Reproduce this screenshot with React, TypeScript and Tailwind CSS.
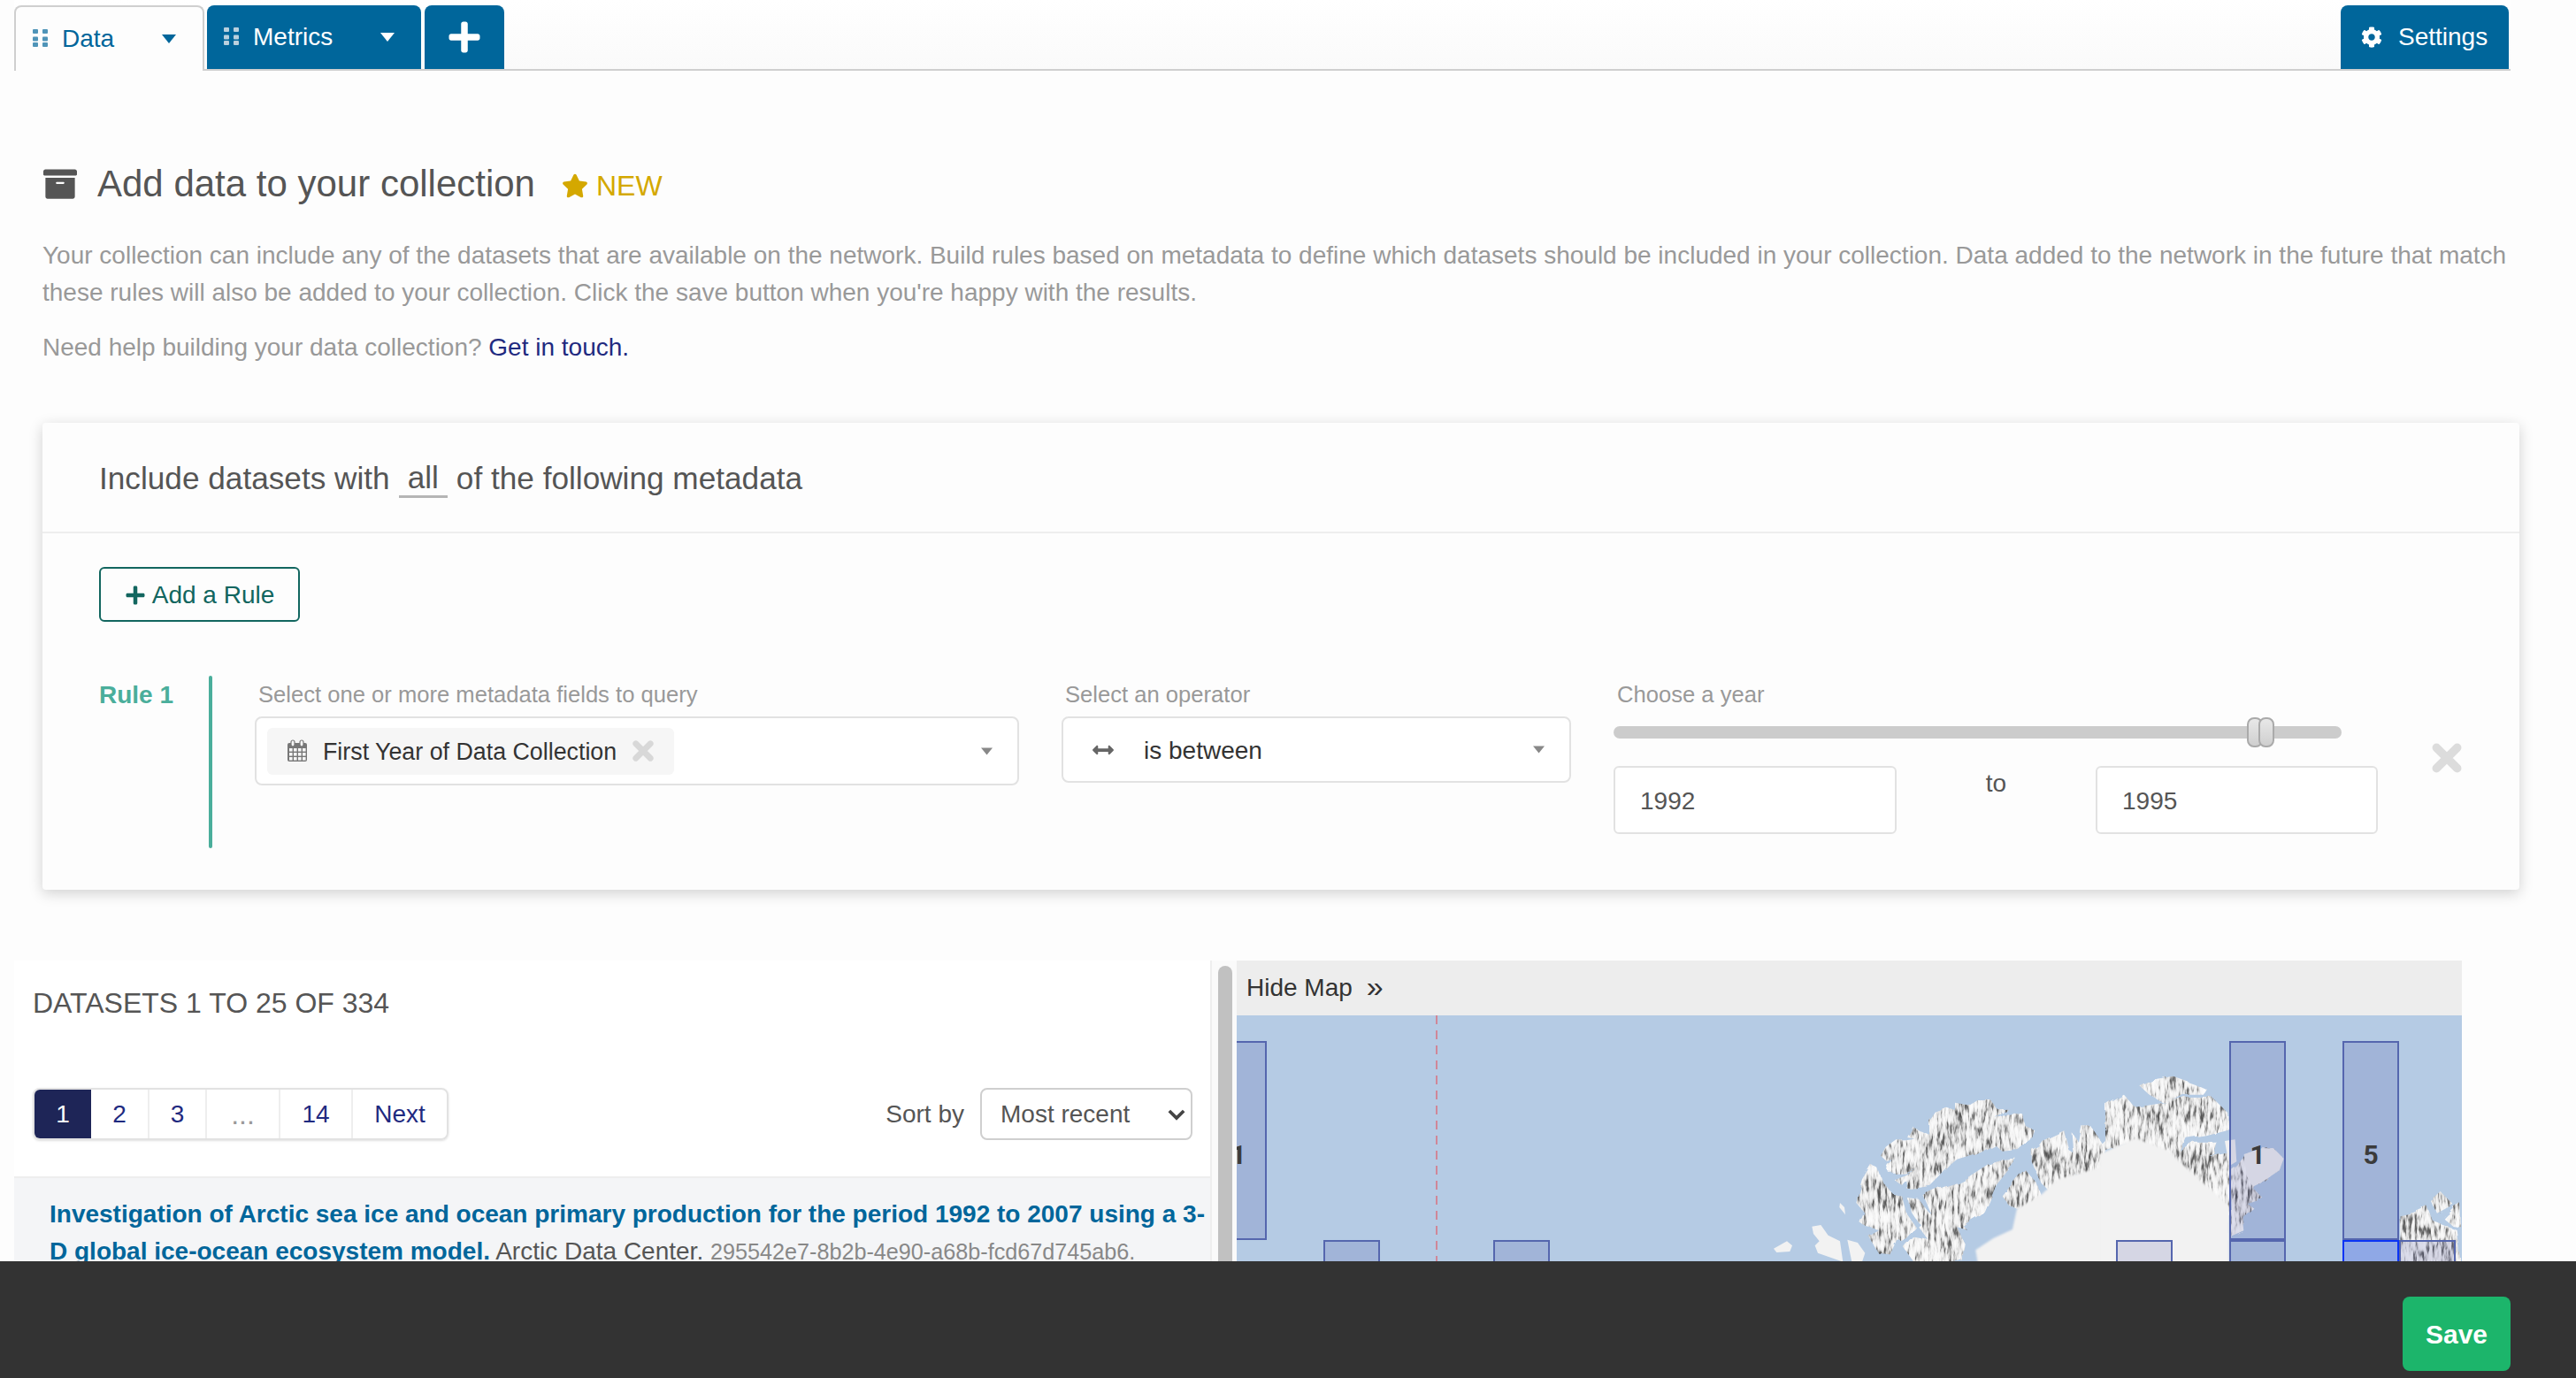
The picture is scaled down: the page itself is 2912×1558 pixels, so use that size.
import React from 'react';
import { FaArchive, FaArrowsAltH, FaCog, FaPlus, FaStar } from 'react-icons/fa';

// Small 2x3 drag handle shown in the tabs
function DragDots({ className }: { className: string }) {
    return (
        <svg viewBox="0 0 17 22" className={className} fill="currentColor">
            {[0, 8.5, 17].map((y) => (
                <g key={y}>
                    <rect x="0" y={y - (y === 17 ? 2 : 0)} width="6" height="5" rx="1" />
                    <rect x="11" y={y - (y === 17 ? 2 : 0)} width="6" height="5" rx="1" />
                </g>
            ))}
        </svg>
    );
}

function Caret({ className }: { className: string }) {
    return (
        <svg viewBox="0 0 16 10" className={className} fill="currentColor">
            <path d="M0 0h16L8 10z" />
        </svg>
    );
}

// Chunky remove cross, the icon set's own is too thin
function RemoveMark({ className }: { className: string }) {
    return (
        <svg viewBox="0 0 32 32" className={className} stroke="currentColor" strokeWidth="9" strokeLinecap="round">
            <path d="M5 5l22 22M27 5L5 27" />
        </svg>
    );
}

function CalendarIcon() {
    return (
        <svg viewBox="0 0 24 26" className="w-[24px] h-[26px] text-[#777]">
            <rect x="1" y="4" width="22" height="21" rx="2" fill="currentColor" />
            <g fill="#f6f6f6">
                {[10, 15, 20].map((y) =>
                    [3, 8, 13, 18].map((x) => <rect key={`${x}-${y}`} x={x} y={y} width="3.6" height="3.6" />)
                )}
            </g>
            <rect x="5" y="1" width="4" height="7" rx="2" fill="#f6f6f6" stroke="currentColor" strokeWidth="1.2" />
            <rect x="15" y="1" width="4" height="7" rx="2" fill="#f6f6f6" stroke="currentColor" strokeWidth="1.2" />
        </svg>
    );
}

const sheetA = [
    '690,170 745,180 770,165 815,165 830,190 868,188 830,225 885,200 915,205 930,250 958,262 945,295 905,330 850,335 825,312 765,345 700,365 680,382 640,425 610,455 570,462 530,465 525,430 540,415 510,450 482,430 520,415 560,395 520,410 468,410 462,388 480,365 462,372 438,350 455,320 490,295 520,295 550,290 525,285 545,248 575,265 600,275 600,230 620,200 660,185 690,195',
    '585,485 640,460 700,440 730,425 800,380 850,365 900,362 870,400 830,450 790,545 750,570 720,590 735,605 700,595 725,650 720,690 720,710 550,710 515,660 545,625 600,635 565,590 610,545',
    '375,430 405,380 430,395 445,440 480,480 510,485 525,545 555,590 510,640 495,630 470,685 430,680 395,620 430,600 385,590 370,580 385,545 355,510 365,465',
    '530,495 570,500 600,540 615,555 590,600 560,570 540,540',
    '950,330 975,315 985,300 1060,265 1075,330 1090,340 1085,270 1110,305 1120,250 1150,250 1190,310 1200,300 1200,400 1100,420 1010,470 980,440 950,370',
    '855,490 900,430 930,400 965,440 980,490 960,520 900,530 870,515',
];

const sheetAPlain = [
    '300,510 315,525 318,550 298,525',
    '205,590 235,585 260,620 300,640 310,710 225,680 215,655 230,640 210,615',
    '75,665 120,640 138,655 130,675 85,678',
    '325,635 360,645 385,680 375,710 340,710',
];

const sheetB = [
    '118,115 170,90 230,80 300,105 345,125 335,140 270,140 225,165 195,170 150,145',
    '0,175 60,140 100,185 140,180 200,170 270,150 360,150 415,205 415,260 340,280 275,290 255,335 300,305 380,305 370,345 340,355 420,340 420,640 340,640 300,500 100,300 0,330',
    '470,345 530,325 570,325 605,360 590,400 530,440 500,460 530,490 510,500 480,510 505,530 470,560 475,610 430,630 420,400 445,380',
    '995,550 1040,540 1090,520 1110,570 1190,600 1205,710 1000,710',
    '1110,510 1145,480 1180,515 1125,545',
    '1145,560 1185,520 1205,510 1205,590 1175,585',
];

const cells = [
    { x: 1368, y: 1177, w: 64, h: 225 },
    { x: 2520, y: 1177, w: 64, h: 225 },
    { x: 2648, y: 1177, w: 64, h: 225 },
    { x: 1496, y: 1402, w: 64, h: 60 },
    { x: 1688, y: 1402, w: 64, h: 60 },
    { x: 2392, y: 1402, w: 64, h: 60 },
    { x: 2520, y: 1402, w: 64, h: 60 },
    { x: 2712, y: 1402, w: 64, h: 60 },
];

function ArcticMap() {
    return (
        <svg viewBox="1398 1148 1385 278" className="block w-[1385px] h-[278px] bg-[#b5cbe4]">
            <defs>
                <filter id="relief" x="0" y="0" width="100%" height="100%" colorInterpolationFilters="sRGB">
                    <feTurbulence type="fractalNoise" baseFrequency="0.03" numOctaves="3" seed="7" result="edge" />
                    <feDisplacementMap in="SourceGraphic" in2="edge" scale="9" result="shape" />
                    <feTurbulence type="fractalNoise" baseFrequency="0.3 0.07" numOctaves="3" seed="4" result="fine" />
                    <feTurbulence type="fractalNoise" baseFrequency="0.04 0.03" numOctaves="2" seed="11" result="broad" />
                    <feColorMatrix in="fine" type="matrix" values="1 0 0 0 0  1 0 0 0 0  1 0 0 0 0  0 0 0 0 1" result="fineGray" />
                    <feColorMatrix in="broad" type="matrix" values="1 0 0 0 0  1 0 0 0 0  1 0 0 0 0  0 0 0 0 1" result="broadGray" />
                    <feComposite in="fineGray" in2="broadGray" operator="arithmetic" k1="0" k2="1.1" k3="0.55" k4="-0.33" result="mixed" />
                    <feComponentTransfer in="mixed" result="streaks">
                        <feFuncR type="table" tableValues="0.3 0.34 0.45 0.68 0.86 0.94 0.97 0.98 0.99 1" />
                        <feFuncG type="table" tableValues="0.3 0.34 0.45 0.68 0.86 0.94 0.97 0.98 0.99 1" />
                        <feFuncB type="table" tableValues="0.3 0.34 0.45 0.68 0.86 0.94 0.97 0.98 0.99 1" />
                    </feComponentTransfer>
                    <feGaussianBlur in="streaks" stdDeviation="0.45" result="soft" />
                    <feComposite in="soft" in2="shape" operator="in" />
                </filter>
                <filter id="soft" x="-5%" y="-5%" width="110%" height="110%">
                    <feGaussianBlur stdDeviation="3" />
                </filter>
            </defs>
            <g filter="url(#relief)">
                <g transform="translate(1980 1190) scale(0.3333)">
                    {sheetA.map((p) => <polygon key={p} points={p} fill="#fff" />)}
                </g>
                <g transform="translate(2380 1190) scale(0.3333)">
                    {sheetB.map((p) => <polygon key={p} points={p} fill="#fff" />)}
                </g>
            </g>
            <g transform="translate(1980 1190) scale(0.3333)" fill="#f2f2f2">
                {sheetAPlain.map((p) => <polygon key={p} points={p} />)}
                <polygon filter="url(#soft)" points="760,670 820,630 885,600 900,530 985,480 1040,430 1200,385 1200,730 770,730" />
            </g>
            <g transform="translate(2380 1190) scale(0.3333)" fill="#f2f2f2">
                <polygon filter="url(#soft)" points="-20,345 100,290 210,330 330,440 420,520 420,730 -20,730" />
                <polygon points="405,300 440,295 445,370 420,385" />
                <polygon points="470,345 530,325 570,325 605,360 590,400 530,440 500,455 480,420" />
            </g>
            <line x1="1624" y1="1148" x2="1624" y2="1426" stroke="#d9717f" strokeWidth="1.5" strokeDasharray="10 7" />
            {cells.map((c) => (
                <rect
                    key={`${c.x}-${c.y}`}
                    x={c.x + 1}
                    y={c.y + 1}
                    width={c.w - 2}
                    height={c.h - 2}
                    fill="rgb(47,57,147)"
                    fillOpacity="0.15"
                    stroke="#5566ae"
                    strokeWidth="2"
                />
            ))}
            <rect x="2649" y="1403" width="62" height="60" fill="#8fa8e6" stroke="#0a33f5" strokeWidth="2" />
            <g fontFamily="Roboto, sans-serif" fontWeight="700" fontSize="30" fill="#3b3b3b" textAnchor="middle">
                <text x="1400" y="1316">1</text>
                <text x="2552" y="1316">1</text>
                <text x="2680" y="1316">5</text>
            </g>
        </svg>
    );
}

export default function App() {
    return (
        <div className="relative h-screen overflow-hidden bg-[#fdfdfd] font-['Liberation_Sans',Arial,sans-serif] text-[28px] text-[#555]">
            {/* Tabs */}
            <div className="ml-[16px] w-[2822px] h-[80px] flex items-end border-b-2 border-[#cfcfcf] bg-gradient-to-b from-white to-[#fafafa]">
                <div className="-mb-[2px] w-[215px] h-[74px] flex items-center pl-[19px] pr-[30px] bg-[#fdfdfd] border-2 border-b-0 border-[#cfcfcf] rounded-t-[8px] text-[#00669b]">
                    <DragDots className="w-[17px] h-[22px] text-[#4f94b8]" />
                    <span className="ml-[16px] flex-1">Data</span>
                    <Caret className="w-[16px] h-[10px]" />
                </div>
                <div className="ml-[3px] w-[242px] h-[72px] flex items-center pl-[19px] pr-[30px] bg-[#00669b] rounded-t-[8px] text-white">
                    <DragDots className="w-[17px] h-[22px] text-[#b9d0de]" />
                    <span className="ml-[16px] flex-1">Metrics</span>
                    <Caret className="w-[16px] h-[10px]" />
                </div>
                <div className="ml-[4px] w-[90px] h-[72px] flex items-center justify-center bg-[#00669b] rounded-t-[8px] text-white">
                    <FaPlus className="w-[40px] h-[40px]" />
                </div>
                <div className="ml-auto mr-[2px] w-[190px] h-[72px] flex items-center pl-[23px] bg-[#00669b] rounded-t-[8px] text-white">
                    <FaCog className="w-[24px] h-[24px]" />
                    <span className="ml-[18px]">Settings</span>
                </div>
            </div>

            {/* Intro */}
            <div className="pl-[48px] pr-[64px] pt-[106px]">
                <div className="flex items-center h-[44px]">
                    <FaArchive className="w-[40px] h-[38px] text-[#555]" />
                    <h1 className="ml-[22px] text-[42px] leading-none text-[#555]">Add data to your collection</h1>
                    <FaStar className="ml-[30px] mt-[4px] w-[30px] h-[28px] text-[#d4a800]" />
                    <span className="ml-[9px] mt-[4px] text-[32px] leading-none text-[#d4a800]">NEW</span>
                </div>
                <p className="mt-[38px] leading-[42px] text-[#999]">
                    Your collection can include any of the datasets that are available on the network. Build rules based on metadata to define which datasets should be included in your collection. Data added to the network in the future that match these rules will also be added to your collection. Click the save button when you're happy with the results.
                </p>
                <p className="mt-[20px] leading-[42px] text-[#999]">
                    Need help building your data collection? <a className="text-[#1f2a80]">Get in touch.</a>
                </p>
            </div>

            {/* Rule card */}
            <div className="mt-[64px] ml-[48px] w-[2800px] h-[528px] bg-[#fdfdfd] rounded-[4px] shadow-[0_4px_16px_rgba(0,0,0,0.18)]">
                <div className="h-[125px] pl-[64px] pt-[4px] flex items-center border-b-2 border-[#eeeeee] text-[35.2px]">
                    <span>Include datasets with</span>
                    <span className="ml-[10px] mr-[10px] px-[10px] border-b-[3px] border-[#b5b5b5] leading-[40px]">all</span>
                    <span>of the following metadata</span>
                </div>
                <div className="pl-[64px] pt-[38px]">
                    <button className="w-[227px] h-[62px] pt-[2px] flex items-center justify-center border-2 border-[#12665f] rounded-[6px] text-[#12665f]">
                        <FaPlus className="w-[24px] h-[24px] mr-[7px]" />
                        Add a Rule
                    </button>
                    <div className="mt-[61px] flex items-start">
                        <div className="w-[124px] pt-[6px] font-bold text-[#4aae9b] leading-[32px]">Rule 1</div>
                        <div className="w-[4px] h-[195px] rounded bg-[#4aae9b]"></div>

                        <div className="ml-[48px] w-[864px]">
                            <div className="pl-[4px] pt-[6px] text-[25.6px] leading-[30px] text-[#999]">Select one or more metadata fields to query</div>
                            <div className="mt-[10px] h-[78px] flex items-center pl-[12px] pr-[28px] border-2 border-[#e2e2e2] rounded-[8px] bg-white">
                                <div className="h-[53px] w-[460px] flex items-center pl-[22px] rounded-[6px] bg-[#f6f6f6] text-[26.8px] text-[#333]">
                                    <CalendarIcon />
                                    <span className="ml-[17px] pt-[2px]">First Year of Data Collection</span>
                                    <RemoveMark className="ml-[18px] w-[24px] h-[28px] text-[#d8d8d8]" />
                                </div>
                                <Caret className="ml-auto w-[13px] h-[9px] text-[#888]" />
                            </div>
                        </div>

                        <div className="ml-[48px] w-[576px]">
                            <div className="pl-[4px] pt-[6px] text-[25.6px] leading-[30px] text-[#999]">Select an operator</div>
                            <div className="mt-[10px] h-[75px] flex items-center pl-[30px] pr-[28px] border-2 border-[#e2e2e2] rounded-[8px] bg-white text-[#333]">
                                <FaArrowsAltH className="w-[30px] h-[24px] text-[#666]" />
                                <span className="ml-[31px] pt-[2px]">is between</span>
                                <Caret className="ml-auto w-[13px] h-[9px] text-[#888]" />
                            </div>
                        </div>

                        <div className="ml-[48px] w-[960px]">
                            <div className="pl-[4px] pt-[6px] text-[25.6px] leading-[30px] text-[#999]">Choose a year</div>
                            <div className="relative mt-[21px] w-[823px] h-[14px] rounded-full bg-[#cccccc]">
                                <span className="absolute left-[716px] -top-[10px] w-[18px] h-[34px] rounded-[8px] border-2 border-[#aaaaaa] bg-gradient-to-b from-[#e8e8e8] to-[#cfcfcf]"></span>
                                <span className="absolute left-[729px] -top-[10px] w-[18px] h-[34px] rounded-[8px] border-2 border-[#aaaaaa] bg-gradient-to-b from-[#e8e8e8] to-[#cfcfcf]"></span>
                            </div>
                            <div className="mt-[31px] flex items-start">
                                <input readOnly defaultValue="1992" className="w-[320px] h-[77px] pl-[28px] pt-[2px] border-2 border-[#e2e2e2] rounded-[6px] bg-white text-[#555]" />
                                <span className="w-[225px] pt-[4px] text-center leading-[32px]">to</span>
                                <input readOnly defaultValue="1995" className="w-[319px] h-[77px] pl-[28px] pt-[2px] border-2 border-[#e2e2e2] rounded-[6px] bg-white text-[#555]" />
                                <RemoveMark className="ml-[61px] -mt-[28px] w-[34px] h-[38px] text-[#dcdcdc]" />
                            </div>
                        </div>
                    </div>
                </div>
            </div>

            {/* Results and map */}
            <div className="mt-[80px] ml-[16px] flex">
                <div className="w-[1352px] bg-white">
                    <div className="pl-[21px] pt-[30px] text-[32px] leading-[36px] h-[144px]">DATASETS 1 TO 25 OF 334</div>
                    <div className="h-[100px] flex items-start pl-[21px] pr-[20px]">
                        <div className="h-[59px] flex border-2 border-[#e2e2e2] rounded-[8px] shadow-sm text-[#1f2a80] overflow-hidden">
                            <span className="w-[64px] flex items-center justify-center bg-[#1e2557] text-white">1</span>
                            <span className="w-[66px] flex items-center justify-center border-r-2 border-[#eeeeee]">2</span>
                            <span className="w-[65px] flex items-center justify-center border-r-2 border-[#eeeeee]">3</span>
                            <span className="w-[83px] flex items-center justify-center border-r-2 border-[#eeeeee] text-[32px] text-[#999]">...</span>
                            <span className="w-[82px] flex items-center justify-center border-r-2 border-[#eeeeee]">14</span>
                            <span className="w-[106px] flex items-center justify-center">Next</span>
                        </div>
                        <span className="ml-auto h-[59px] flex items-center">Sort by</span>
                        <div className="relative ml-[18px] w-[240px] h-[59px]">
                            <select defaultValue="recent" className="appearance-none w-full h-full pl-[21px] border-2 border-[#cfcfcf] rounded-[8px] bg-white text-[#555]">
                                <option value="recent">Most recent</option>
                            </select>
                            <svg viewBox="0 0 22 14" className="absolute right-[8px] top-[24px] w-[20px] h-[13px] text-[#444] pointer-events-none" fill="none" stroke="currentColor" strokeWidth="4">
                                <path d="M2 2l9 9 9-9" />
                            </svg>
                        </div>
                    </div>
                    <div className="border-t-2 border-[#eeeeee] bg-[#f4f5f7] pl-[40px] pr-[4px] pt-[20px] leading-[42px] h-[200px]">
                        <a className="font-bold text-[#00669b]">Investigation of Arctic sea ice and ocean primary production for the period 1992 to 2007 using a 3-D global ice-ocean ecosystem model.</a>{' '}
                        <span>Arctic Data Center.</span>{' '}
                        <span className="text-[25.2px] text-[#888]">295542e7-8b2b-4e90-a68b-fcd67d745ab6.</span>
                    </div>
                </div>
                <div className="w-[30px] border-l-2 border-[#eeeeee] pl-[7px] pt-[6px] bg-[#fafafa]">
                    <div className="w-[16px] h-[600px] rounded-full bg-[#c1c1c1]"></div>
                </div>
                <div className="w-[1385px]">
                    <div className="h-[62px] flex items-center pl-[11px] bg-[#ededed] text-[#333]">
                        Hide Map<span className="ml-[16px] text-[34px] leading-none -mt-[4px]">»</span>
                    </div>
                    <ArcticMap />
                </div>
            </div>

            {/* Footer */}
            <div className="absolute inset-x-0 bottom-0 h-[132px] bg-[#333333]">
                <button className="absolute left-[2716px] top-[40px] w-[122px] h-[84px] rounded-[8px] bg-[#1cb56b] text-white font-bold text-[30px]">Save</button>
            </div>
        </div>
    );
}
